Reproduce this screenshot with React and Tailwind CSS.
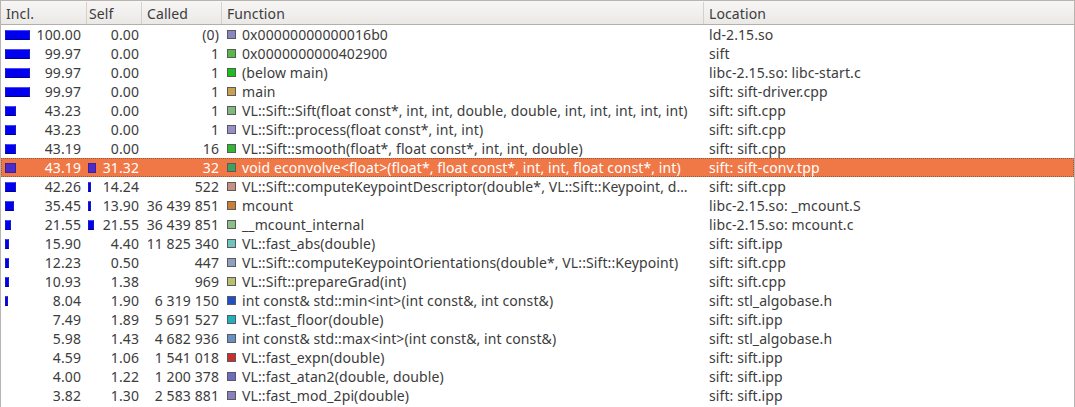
import React from "react";

const rows = [
  ["100.00", 25, "0.00", 0, "(0)", "#8a86c0", "0x00000000000016b0", "ld-2.15.so"],
  ["99.97", 25, "0.00", 0, "1", "#58b848", "0x0000000000402900", "sift"],
  ["99.97", 25, "0.00", 0, "1", "#1ac01a", "(below main)", "libc-2.15.so: libc-start.c"],
  ["99.97", 25, "0.00", 0, "1", "#c8a050", "main", "sift: sift-driver.cpp"],
  ["43.23", 11, "0.00", 0, "1", "#80b880", "VL::Sift::Sift(float const*, int, int, double, double, int, int, int, int, int)", "sift: sift.cpp"],
  ["43.23", 11, "0.00", 0, "1", "#9590c8", "VL::Sift::process(float const*, int, int)", "sift: sift.cpp"],
  ["43.19", 11, "0.00", 0, "16", "#30b830", "VL::Sift::smooth(float*, float const*, int, int, double)", "sift: sift.cpp"],
  ["43.19", 11, "31.32", 8, "32", "#40a060", "void econvolve<float>(float*, float const*, int, int, float const*, int)", "sift: sift-conv.tpp", true],
  ["42.26", 11, "14.24", 3, "522", "#c89080", "VL::Sift::computeKeypointDescriptor(double*, VL::Sift::Keypoint, d…", "sift: sift.cpp"],
  ["35.45", 9, "13.90", 3, "36 439 851", "#c88038", "mcount", "libc-2.15.so: _mcount.S"],
  ["21.55", 6, "21.55", 6, "36 439 851", "#88c088", "__mcount_internal", "libc-2.15.so: mcount.c"],
  ["15.90", 4, "4.40", 0, "11 825 340", "#70c4c0", "VL::fast_abs(double)", "sift: sift.ipp"],
  ["12.23", 4, "0.50", 0, "447", "#90a0c0", "VL::Sift::computeKeypointOrientations(double*, VL::Sift::Keypoint)", "sift: sift.cpp"],
  ["10.93", 4, "1.38", 0, "969", "#b8c070", "VL::Sift::prepareGrad(int)", "sift: sift.cpp"],
  ["8.04", 3, "1.90", 0, "6 319 150", "#2050c8", "int const& std::min<int>(int const&, int const&)", "sift: stl_algobase.h"],
  ["7.49", 0, "1.89", 0, "5 691 527", "#20b0c0", "VL::fast_floor(double)", "sift: sift.ipp"],
  ["5.98", 0, "1.43", 0, "4 682 936", "#6890c0", "int const& std::max<int>(int const&, int const&)", "sift: stl_algobase.h"],
  ["4.59", 0, "1.06", 0, "1 541 018", "#c83030", "VL::fast_expn(double)", "sift: sift.ipp"],
  ["4.00", 0, "1.22", 0, "1 200 378", "#6c6cc0", "VL::fast_atan2(double, double)", "sift: sift.ipp"],
  ["3.82", 0, "1.30", 0, "2 583 881", "#8a80c0", "VL::fast_mod_2pi(double)", "sift: sift.ipp"],
];

const cols = "grid grid-cols-[86px_55px_80px_482px_1fr]";

function Bar({ width, selected }) {
  if (!width) return null;
  return (
    <span
      className={
        "h-[10px] shrink-0 border " +
        (selected
          ? "bg-[#4c2cc8] border-[#3a20a0]"
          : "bg-[#0000ee] border-t-[#4a4aff] border-x-[#1818c0] border-b-[#000090]")
      }
      style={{ width }}
    />
  );
}

function Row({ r }) {
  const [incl, inclBar, self, selfBar, called, color, fn, loc, selected] = r;
  return (
    <div
      className={
        cols +
        " h-[19px] items-center leading-[19px] " +
        (selected ? "bg-[#f07746] text-white outline-1 outline-dotted outline-[#9a5a3a] -outline-offset-1" : "text-[#3c3c3c]")
      }
    >
      <div className="flex items-center pl-[4px] pr-[6px]">
        <Bar width={inclBar} selected={selected} />
        <span className="ml-auto">{incl}</span>
      </div>
      <div className="flex items-center pl-[1px] pr-[3px]">
        <Bar width={selfBar} selected={selected} />
        <span className="ml-auto">{self}</span>
      </div>
      <div className="pr-[3px] text-right whitespace-nowrap">{called}</div>
      <div className="flex items-center pl-[5px] whitespace-nowrap overflow-hidden">
        <span
          className="w-[9px] h-[9px] shrink-0 border border-[#5a5a5a]"
          style={{ backgroundColor: color }}
        />
        <span className="ml-[6px]">{fn}</span>
      </div>
      <div className="pl-[5px] whitespace-nowrap overflow-hidden">{loc}</div>
    </div>
  );
}

export default function App() {
  const head = "h-full flex items-center border-r border-[#d4d1cc]";
  return (
    <div className="w-[1075px] h-[407px] overflow-hidden bg-white border-x border-t border-[#b8b5b0] font-['Noto_Sans',sans-serif] text-[14px] tracking-[0.1px]">
      <div className={cols + " h-[24px] border-b border-[#b3b0ab] bg-gradient-to-b from-[#f7f6f5] to-[#ebe9e6] text-[#3c3c3c] pt-[1px]"}>
        <div className={head + " pl-[5px]"}>Incl.</div>
        <div className={head + " pl-[2px]"}>Self</div>
        <div className={head + " pl-[5px]"}>Called</div>
        <div className={head + " pl-[5px]"}>Function</div>
        <div className="h-full flex items-center pl-[5px]">Location</div>
      </div>
      {rows.map((r, i) => (
        <Row key={i} r={r} />
      ))}
    </div>
  );
}
